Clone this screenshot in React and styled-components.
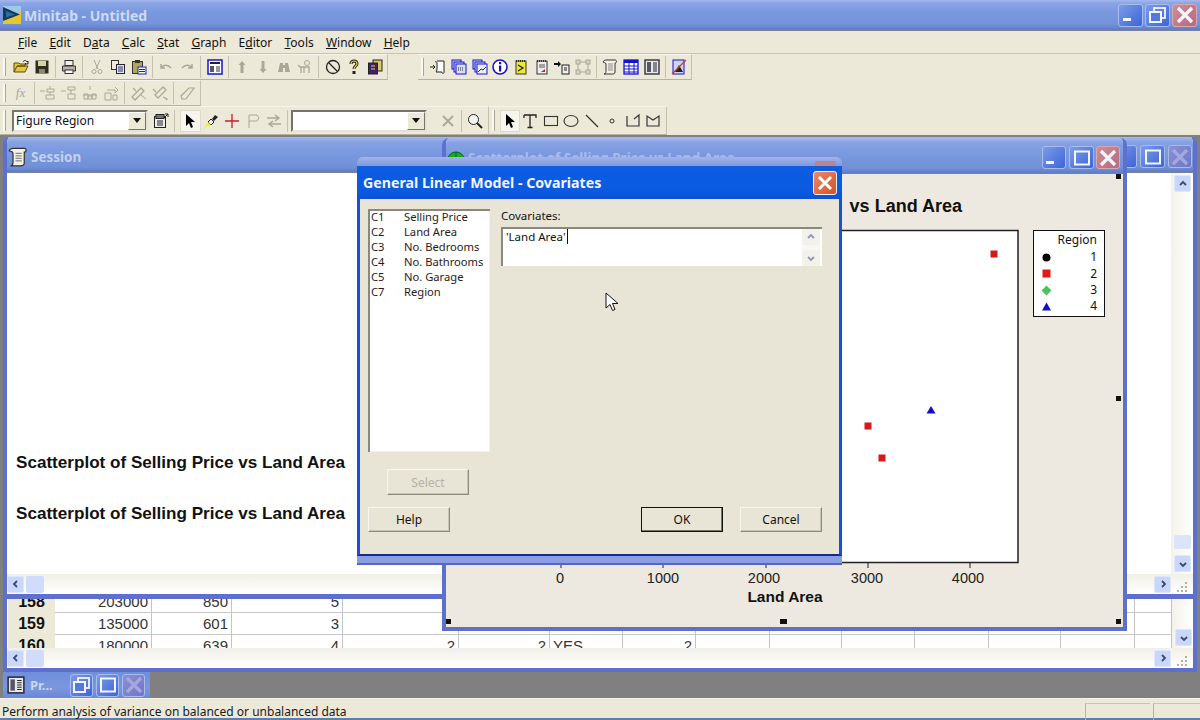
import React from 'react'
import styled, { createGlobalStyle } from 'styled-components'

const UI = `"Noto Sans", "DejaVu Sans", sans-serif`
const ARIAL = `"Liberation Sans", Arial, sans-serif`

const Global = createGlobalStyle`
  html, body { margin: 0; padding: 0; background: #808080; }
  * { box-sizing: border-box; }
`

const Ic = ({ children }) => <svg width="16" height="16" viewBox="0 0 16 16" fill="none">{children}</svg>
const G = '#aaa899'

const icons = {
  open: <><path d="M1 13V4h5l1 1h5v2H4l-3 6h11l3-6H4" fill="#e6c63c" stroke="#5c4c10" /><path d="M10 3c1-2 3-2 4 0l1-1v3h-3l1-1" stroke="#222" /></>,
  save: <><rect x="1.5" y="1.5" width="13" height="13" fill="#2e2e20" /><rect x="4" y="2" width="8" height="5" fill="#d8d4a0" /><rect x="5" y="10" width="6" height="4" fill="#8a8a70" /></>,
  print: <><rect x="4" y="1.5" width="8" height="5" fill="#eee" stroke="#333" /><path d="M1.5 7h13v5h-13z" fill="#b8b4a4" stroke="#333" /><rect x="4" y="11" width="8" height="3.5" fill="#fff" stroke="#333" /></>,
  cut: <><path d="M5 1l4 9M11 1L7 10" stroke={G} /><circle cx="5" cy="12.5" r="2" stroke={G} /><circle cx="11" cy="12.5" r="2" stroke={G} /></>,
  copy: <><rect x="1.5" y="1.5" width="7" height="9" fill="#eeeadc" stroke="#333" /><rect x="6.5" y="5.5" width="8" height="9" fill="#dfe4fa" stroke="#223" /><path d="M8 8h5M8 10h5M8 12h5" stroke="#335" /></>,
  paste: <><rect x="1.5" y="2.5" width="10" height="12" fill="#b0a850" stroke="#333" /><rect x="4" y="1" width="5" height="3" fill="#333" /><rect x="7" y="8" width="8" height="7" fill="#fff" stroke="#1820c0" /><path d="M8 10.5h6M8 12.5h6" stroke="#1820c0" /></>,
  undo: <path d="M3 5v4h4M3.5 8.5C6 5.5 10 5.5 13 9" stroke={G} strokeWidth="1.5" />,
  redo: <path d="M13 5v4H9M12.500 8.5C10 5.5 6 5.5 3 9" stroke={G} strokeWidth="1.5" />,
  frame: <><rect x="1" y="1" width="14" height="14" fill="#fff" stroke="#1414d0" strokeWidth="1.500" /><rect x="3" y="3" width="10" height="2" fill="#222" /><rect x="3" y="7" width="4" height="6" fill="#556" /><path d="M9 8h4M9 10h4M9 12h4" stroke="#333" /></>,
  up: <path d="M8 2l3.500 4H9.500v8h-3V6H4.500z" fill={G} />,
  down: <path d="M8 14l3.500-4H9.500V2h-3v8H4.500z" fill={G} />,
  binoc: <><path d="M2 13l2-9h3v9zM14 13l-2-9H9v9z" fill={G} /><rect x="7" y="6" width="2" height="3" fill={G} /></>,
  person: <><circle cx="10" cy="4" r="2.500" stroke={G} /><path d="M4 14V8h8v6M7 8v6M1 6l3 3" stroke={G} strokeWidth="1.300" /></>,
  ban: <><circle cx="8" cy="8" r="6.500" stroke="#222" strokeWidth="1.300" /><path d="M3.500 3.500l9 9" stroke="#222" strokeWidth="1.300" /></>,
  help: <><path d="M5 5c0-4 6-4 6 0 0 2-3 2-3 5" stroke="#222" strokeWidth="3" /><path d="M5 5c0-4 6-4 6 0 0 2-3 2-3 5" stroke="#e8d040" strokeWidth="1.200" /><rect x="6.500" y="12" width="3" height="3" fill="#222" /></>,
  stack: <><rect x="6" y="1" width="9" height="11" fill="#d8cc60" stroke="#222" /><rect x="1.500" y="4" width="9" height="11" fill="#402068" stroke="#222" /><path d="M4 7h4M4 10h4" stroke="#e8d860" /></>,
  sessIn: <><path d="M7 2h7v11c0 2-2 2-2 0H6c1-1 1-3 1-4V4C7 3 6 2 5 3" fill="#fff" stroke="#222" /><path d="M0 8h5M3 6l2 2-2 2" stroke="#222" /></>,
  winA: <><rect x="1" y="1" width="9" height="9" fill="#ccd4f0" stroke="#1414d0" /><rect x="3" y="3" width="10" height="10" fill="#ccd4f0" stroke="#1414d0" /><rect x="5" y="5" width="10" height="10" fill="#d8def0" stroke="#1414d0" /><path d="M7 9h6M7 11h6" stroke="#223" strokeDasharray="1 1" /></>,
  winB: <><rect x="1" y="1" width="9" height="9" fill="#ccd4f0" stroke="#1414d0" /><rect x="3" y="3" width="10" height="10" fill="#ccd4f0" stroke="#1414d0" /><rect x="5" y="5" width="10" height="10" fill="#e8ecf4" stroke="#1414d0" /><path d="M6 13l3-3 2 1 3-3" stroke="#333" /></>,
  info: <><circle cx="8" cy="8" r="7" fill="#fff" stroke="#1414d0" strokeWidth="1.600" /><rect x="7" y="3" width="2.200" height="2.200" fill="#1414b0" /><rect x="7" y="6.500" width="2.200" height="6" fill="#1414b0" /></>,
  noteY: <><rect x="3" y="2" width="10" height="13" fill="#f0e830" stroke="#333" /><path d="M3 2h10" stroke="#333" strokeDasharray="1 1" strokeWidth="2" /><path d="M5 6l5 3-5 3" stroke="#222" strokeWidth="1.300" /></>,
  noteR: <><rect x="3" y="2" width="10" height="13" fill="#eee" stroke="#333" /><path d="M3 2h10" stroke="#333" strokeDasharray="1 1" strokeWidth="2" /><path d="M5 6h6M5 8h6" stroke="#555" /><path d="M7 13l4-3v3z" fill="#d02020" /></>,
  arrowDoc: <><path d="M0 4h4V2l3 3-3 3V6H0z" fill="#111" /><rect x="8" y="6" width="7" height="9" fill="#eee" stroke="#222" /><path d="M10 9h3M10 11h3" stroke="#222" /></>,
  dashed: <><rect x="3" y="3" width="10" height="10" stroke={G} /><rect x="1" y="1" width="4" height="4" fill="#d8d4c4" stroke={G} /><rect x="11" y="1" width="4" height="4" fill="#d8d4c4" stroke={G} /><rect x="1" y="11" width="4" height="4" fill="#d8d4c4" stroke={G} /><rect x="11" y="11" width="4" height="4" fill="#d8d4c4" stroke={G} /></>,
  scroll: <><path d="M4 1h9c2 0 2 3 0 3v9c0 2-2 2-3 2H2c2 0 2-3 2-3V5C4 3 1 4 1 3c0-1 2-2 3-2z" fill="#f4f2e8" stroke="#333" /><path d="M6 5h5M6 7h5M6 9h5M6 11h5" stroke="#888" /></>,
  grid: <><rect x="1" y="1" width="14" height="14" fill="#fff" stroke="#1414d0" strokeWidth="1.300" /><rect x="1" y="1" width="14" height="3" fill="#1414d0" /><path d="M6 1v14M11 1v14M1 7h14M1 10h14M1 13h14" stroke="#1414d0" /></>,
  cols: <><rect x="1" y="1" width="14" height="14" fill="#e8e8e8" stroke="#223" strokeWidth="1.300" /><rect x="3" y="3" width="4" height="10" fill="#556" /><path d="M9 4h4M9 6h4M9 8h4M9 10h4M9 12h4" stroke="#223" /></>,
  crossed: <><rect x="2" y="1" width="11" height="14" fill="#cfd6f0" stroke="#1414d0" /><path d="M4 13l4-7 4 7z" fill="#222" /><path d="M1 15L15 1" stroke="#c84020" strokeWidth="1.300" /></>,
  flowA: <><path d="M0 6h5M7 4h7v3H7zM10 1v3M10 7v3M6 10h8v4H6z" stroke={G} /></>,
  flowB: <><path d="M0 6h5M7 2h7v3H7zM10 5v4M7 9h7v5H7z" stroke={G} /></>,
  flowC: <><path d="M8 1v4M1 10h14M2 9h4v5H2zM10 9h4v5h-4zM6 11h4v3H6z" stroke={G} /></>,
  flowD: <><path d="M2 8h6v7H2zM4 5h8v3M12 2l3 3-3 3M10 10h4v5h-4z" stroke={G} /></>,
  tool: <><path d="M1 12l9-9 3 3-9 9zM2 3l3 3" stroke={G} strokeWidth="1.300" /><path d="M10 10l5 4" stroke={G} /></>,
  toolB: <><path d="M3 10l8-8 3 3-8 8zM1 4l3 3M11 12l4 2-1 1" stroke={G} strokeWidth="1.300" /></>,
  eraser: <path d="M2 11l8-8h5L7 14H3z" stroke={G} strokeWidth="1.200" />,
  regionProps: <><rect x="1.500" y="3.500" width="11" height="11" fill="#eee" stroke="#222" /><rect x="3" y="1.500" width="8" height="4" fill="#777" stroke="#222" /><path d="M4 8h6M4 10h6M4 12h6" stroke="#222" /><path d="M11 5l4-4M15 1h-3M15 1v3" stroke="#222" /></>,
  pointer: <path d="M4 1l0 12 3-3 2 5 2-1-2-5 4 0z" fill="#000" />,
  brush: <><path d="M9 6l3-4 3 2-4 4z" fill="#222" /><path d="M8 6l3 3-3 3-3-3z" fill="#eee" stroke="#222" /><path d="M1 15l4-6 3 3z" fill="#f0ec40" /></>,
  plus: <path d="M8 1v14M1 8h14" stroke="#c02030" strokeWidth="1.300" />,
  flag: <><path d="M4 15V2h8l2 3-2 3H4" stroke={G} /></>,
  swap: <><path d="M1 5h11M9 2l4 3-4 3M15 11H4M7 8l-4 3 4 3" stroke={G} strokeWidth="1.500" /></>,
  xGray: <path d="M3 3l10 10M13 3L3 13" stroke={G} strokeWidth="1.800" />,
  zoom: <><circle cx="6.500" cy="6.500" r="5" fill="#f4f4f0" stroke="#222" /><path d="M10 10l5 5" stroke="#222" strokeWidth="2" /></>,
  T: <path d="M2 2h12v3M2 2v3M8 2v12M5.500 14.500h5" stroke="#222" strokeWidth="1.300" />,
  rect: <rect x="1.500" y="3.500" width="13" height="9" stroke="#333" strokeWidth="1.100" />,
  ellipse: <ellipse cx="8" cy="8" rx="7" ry="5.500" stroke="#333" strokeWidth="1.100" />,
  line: <path d="M2 2l12 12" stroke="#333" strokeWidth="1.300" />,
  dot: <circle cx="8" cy="8" r="2" stroke="#333" />,
  polyA: <path d="M2 3v10h12V2L9 6" stroke="#333" strokeWidth="1.200" />,
  polyB: <path d="M2 13V3l6 4 6-4v10z" stroke="#333" strokeWidth="1.200" />,
}

const AppFrame = styled.div`
  width: 1200px;
  height: 720px;
  overflow: hidden;
  display: flex;
  flex-direction: column;
  background: #ece9d8;
  font-family: ${UI};
  color: #111;
`

const AppTitle = styled.div`
  height: 31px;
  flex: none;
  display: flex;
  align-items: center;
  padding: 0 3px;
  background: linear-gradient(#a3b9ee 0, #8ba5e6 3px, #7a99de 12px, #7593da 24px, #5f7bc8 30px);
  border-bottom: 1px solid #7c7f9c;
`
const AppName = styled.span`
  margin-left: 3px;
  flex: 1;
  font: bold 14px ${UI};
  color: #cfdaf4;
`

const WinBtn = styled.span`
  width: ${p => p.$w || 25}px;
  height: 23px;
  margin-left: ${p => p.$gap ?? 2}px;
  flex: none;
  display: flex;
  align-items: center;
  justify-content: center;
  border-radius: 3px;
  border: 1px solid ${p => (p.$close ? '#d8a8b4' : '#a8bcec')};
  background: ${p => {
    if (p.$dim) return 'linear-gradient(135deg,#8a90d4,#6f78c8)'
    if (p.$close) return 'linear-gradient(135deg,#c99098,#b9697c)'
    return 'linear-gradient(135deg,#7c9ce8,#3c64d8)'
  }};
`

const BtnGlyph = ({ kind, dim }) => {
  const w = dim ? '#a4a8e0' : '#f4f6fc'
  return (
    <svg width="20" height="18" viewBox="0 0 20 18" fill="none">
      {kind === 'min' && <rect x="2" y="12" width="8" height="3" fill={w} />}
      {kind === 'max' && <rect x="3" y="2.500" width="14" height="13" stroke={w} strokeWidth="2" />}
      {kind === 'restore' && <><rect x="6" y="2" width="11" height="10" stroke={w} strokeWidth="1.800" /><rect x="2" y="6" width="11" height="10" fill="#5578dc" stroke={w} strokeWidth="2" /></>}
      {kind === 'close' && <path d="M3 2l14 14M17 2L3 16" stroke={w} strokeWidth="3.200" />}
    </svg>
  )
}

const MenuBar = styled.div`
  height: 23px;
  flex: none;
  display: flex;
  align-items: center;
  gap: 12.200px;
  padding-left: 18px;
  border-bottom: 1px solid #c8c5b2;
  font-size: 12px;
`
const MenuItem = styled.span`
  white-space: nowrap;
  u { text-underline-offset: 1px; }
`

const ToolRow = styled.div`
  height: ${p => p.$h || 26}px;
  flex: none;
  display: flex;
  align-items: stretch;
`
const ToolBar = styled.div`
  position: relative;
  display: flex;
  align-items: center;
  padding-left: ${p => p.$pad || 10}px;
  padding-right: ${p => p.$end || 2}px;
  margin-left: ${p => p.$ml || 0}px;
  border-top: 1px solid #f6f4ea;
  border-bottom: 1px solid #b5b2a0;
  border-right: 1px solid #c4c1ae;
  &::before {
    content: '';
    position: absolute;
    left: 3px;
    top: 3px;
    bottom: 3px;
    width: 2px;
    background: #fafaf4;
    border-right: 1px solid #a8a594;
  }
`
const ToolBtn = styled.span`
  width: ${p => p.$w || 21}px;
  height: 22px;
  flex: none;
  margin-left: ${p => p.$ml || 0}px;
  display: flex;
  align-items: center;
  justify-content: center;
  font: italic 13px "Liberation Serif", serif;
  color: ${G};
  background: ${p => (p.$on ? '#f6f5ee' : 'transparent')};
  border: ${p => (p.$on ? '1px solid #dddac8' : 'none')};
`
const Sep = styled.i`
  width: 6.5px;
  height: 22px;
  flex: none;
  background: linear-gradient(#c4c1ae, #c4c1ae) center / 1px 100% no-repeat;
`
const Combo = styled.div`
  width: 136px;
  height: 22px;
  flex: none;
  margin: ${p => p.$m || 0};
  display: flex;
  align-items: center;
  background: #fff;
  border: 2px solid;
  border-color: #77756a #e6e3d4 #e6e3d4 #77756a;
  font-size: 12px;
  padding-left: 2px;
  white-space: nowrap;
`
const ComboText = styled.span`
  flex: 1;
  color: #112;
`
const ComboArrow = styled.span`
  width: 18px;
  height: 18px;
  display: flex;
  align-items: center;
  justify-content: center;
  background: #ece9d8;
  border: 1px solid;
  border-color: #fff #77756a #77756a #fff;
  &::after {
    content: '';
    border: 4px solid transparent;
    border-top: 5px solid #111;
    border-bottom: 0;
  }
`

const Mdi = styled.div`
  position: relative;
  flex: 1;
  background: #808080;
`

const Win = styled.div`
  position: absolute;
  display: flex;
  flex-direction: column;
  border: 4px solid #5d70ce;
  border-top: 0;
  border-radius: 7px 7px 0 0;
  overflow: hidden;
`
const SessionWin = styled(Win)`
  left: 3px;
  top: 2px;
  width: 1194px;
  height: 461px;
  background: #fff;
`
const GraphWin = styled(Win)`
  left: 442px;
  top: 3px;
  width: 685px;
  height: 493px;
  background: #ede9e0;
`
const SheetWin = styled(Win)`
  left: 3px;
  top: 461px;
  width: 1194px;
  height: 76px;
  border-top: 3px solid #5d70ce;
  border-radius: 0;
  background: #fff;
`
const WinTitle = styled.div`
  height: 36px;
  flex: none;
  display: flex;
  align-items: center;
  padding: 4px ${p => p.$right || 1}px 0 1px;
  background: linear-gradient(#a3b9ee 0, #86a1e4 5px, #7a99de 16px, #7090d8 30px, #5f7bc8 35px);
  border-bottom: 1px solid #7c7f9c;
`
const TitleText = styled.span`
  flex: 1;
  margin-left: 3px;
  font: bold 13.5px ${UI};
  color: ${p => (p.$faint ? '#a9bcea' : '#c3d0f0')};
  white-space: nowrap;
  overflow: hidden;
`
const SessionPane = styled.div`
  flex: 1;
  min-height: 0;
  display: flex;
`
const SessionLog = styled.div`
  flex: 1;
  display: flex;
  flex-direction: column;
  justify-content: flex-end;
  gap: 31px;
  padding: 0 0 50px 9px;
  font: bold 17.100px/20px ${ARIAL};
  color: #111;
`
const VBar = styled.div`
  width: 22px;
  flex: none;
  display: flex;
  flex-direction: column;
  align-items: flex-start;
  justify-content: space-between;
  padding: 2px 2px 2px 3px;
  background: linear-gradient(90deg, #f3f2ea, #fff);
`
const HBar = styled.div`
  height: 20px;
  flex: none;
  display: flex;
  align-items: center;
  padding-right: 2px;
  background: linear-gradient(#f1f0e8, #fff);
`
const ScrollBtn = styled.span`
  width: 17px;
  height: 17px;
  flex: none;
  display: flex;
  align-items: center;
  justify-content: center;
  background: #c9d8fa;
  border: 1px solid #dde6fb;
  border-radius: 2px;
`
const Thumb = styled.span`
  width: 18px;
  height: 17px;
  margin-left: 2px;
  background: #d0dcf9;
  border-radius: 2px;
`
const VThumb = styled.span`
  width: 17px;
  height: 14px;
  margin-top: auto;
  margin-bottom: 6px;
  background: #dbe4f8;
  border-radius: 2px;
`
const HSpacer = styled.span`
  flex: 1;
`
const GripBox = styled.span`
  width: 17px;
  height: 17px;
  margin-left: 3px;
  flex: none;
  display: flex;
`
const Grip = () => (
  <GripBox>
    <svg width="17" height="17" viewBox="0 0 17 17" fill="#b4b1a0">
      <rect x="11" y="6" width="2" height="2" />
      <rect x="7" y="10" width="2" height="2" /><rect x="11" y="10" width="2" height="2" />
      <rect x="3" y="14" width="2" height="2" /><rect x="7" y="14" width="2" height="2" /><rect x="11" y="14" width="2" height="2" />
    </svg>
  </GripBox>
)

const Chev = ({ dir }) => {
  const d = { up: 'M2 6l3-3 3 3', down: 'M2 4l3 3 3-3', left: 'M6 2L3 5l3 3', right: 'M4 2l3 3-3 3' }[dir]
  return <svg width="10" height="10" viewBox="0 0 10 10" fill="none"><path d={d} stroke="#3a4a78" strokeWidth="1.800" /></svg>
}

const GraphBody = styled.div`
  position: relative;
  flex: 1;
  min-height: 0;
`
const ChartTitle = styled.div`
  margin-top: 22px;
  height: 21px;
  padding-right: 161px;
  text-align: right;
  white-space: nowrap;
  font: bold 18px/21px ${ARIAL};
  color: #111;
`
const Legend = styled.div`
  position: absolute;
  right: 18px;
  top: 56px;
  width: 72px;
  height: 87px;
  background: #fff;
  border: 1px solid #111;
  padding: 1px 7px 0 7px;
  font: 12px/16.300px ${UI};
`
const LegendHead = styled.div`
  text-align: right;
  margin-bottom: 1px;
`
const LegendRow = styled.div`
  display: flex;
  align-items: center;
  justify-content: space-between;
`
const Handle = styled.i`
  position: absolute;
  width: ${p => p.$w || 5}px;
  height: 5px;
  background: #111;
  left: ${p => p.$x}px;
  top: ${p => p.$y}px;
`

const SheetRows = styled.div`
  flex: 1;
  min-height: 0;
  overflow: hidden;
  display: flex;
  padding-left: 1px;
`
const SheetGrid = styled.div`
  flex: 1;
  margin-top: -8px;
`
const SheetRow = styled.div`
  display: grid;
  grid-template-columns: 47px 97px 80px 111px 116px 91px 73px 73px 74px 72px 73px 74px 72px 74px 37px;
  height: 22px;
  border-bottom: 1px solid #c8c8c8;
`
const RowHead = styled.div`
  background: #ece9d8;
  text-align: center;
  font: bold 16px/22px ${ARIAL};
`
const Cell = styled.div`
  border-right: 1px solid #c4c4c4;
  padding: 0 3px;
  text-align: ${p => (p.$left ? 'left' : 'right')};
  font: 15px/22px ${ARIAL};
  color: #333;
  white-space: nowrap;
`
const SheetVBar = styled.div`
  width: 22px;
  flex: none;
  display: flex;
  align-items: flex-end;
  padding: 0 2px 2px 3px;
  background: linear-gradient(90deg, #f3f2ea, #fff);
`

const MiniWin = styled.div`
  position: absolute;
  left: 3px;
  top: 537px;
  width: 147px;
  height: 26px;
  display: flex;
  align-items: center;
  padding: 0 5px 0 4px;
  border-radius: 0 0 3px 3px;
  background: linear-gradient(#6f8edc, #7a97de 60%, #6a88d6);
`
const MiniText = styled.span`
  flex: 1;
  margin-left: 5px;
  font: bold 13px ${UI};
  color: #c9d6f4;
`

const Dialog = styled.div`
  position: absolute;
  left: 357px;
  top: 22px;
  width: 485px;
  height: 408px;
  display: flex;
  flex-direction: column;
  border-radius: 6px 6px 0 0;
  overflow: hidden;
  background: #8b9ee4;
  border-bottom: 2px solid #5566c4;
`
const GhostStrip = styled.div`
  height: 9px;
  flex: none;
  display: flex;
  justify-content: flex-end;
  padding: 4px 6px 0 0;
  background: linear-gradient(#a3b4ea, #7f98e0);
`
const GhostClose = styled.i`
  width: 21px;
  height: 5px;
  background: #c4808c;
  border-radius: 2px 2px 0 0;
`
const DialogTitle = styled.div`
  height: 33px;
  flex: none;
  display: flex;
  align-items: center;
  padding: 0 5px 0 6px;
  background: linear-gradient(#1060e0 0, #0c5ce4 2px, #0b5ae0 24px, #0a52d0 33px);
`
const DialogName = styled.span`
  flex: 1;
  font: bold 14.200px ${UI};
  color: #f2f6ff;
`
const DialogClose = styled.span`
  width: 24px;
  height: 24px;
  display: flex;
  align-items: center;
  justify-content: center;
  border: 1px solid #f4f4f4;
  border-radius: 3px;
  background: linear-gradient(135deg, #ea8a66, #d8502c);
`
const DialogBody = styled.div`
  position: relative;
  flex: none;
  height: 357px;
  display: flex;
  flex-direction: column;
  padding: 10px 17px 20px 8px;
  background: #e8e4d6;
  border: solid #1a50d4;
  border-width: 0 3px;
  border-bottom: 2px solid #142a90;
`
const DialogMain = styled.div`
  flex: 1;
  display: flex;
  gap: 11px;
`
const LeftCol = styled.div`
  width: 122px;
  flex: none;
`
const ColList = styled.div`
  height: 243px;
  padding: 0 3px;
  background: #fff;
  box-shadow: inset 2px 2px 0 #8a887c, inset -1px -1px 0 #f4f2e8;
  font-size: 11.200px;
  line-height: 15px;
`
const ColRow = styled.div`
  display: grid;
  grid-template-columns: 33px 1fr;
  white-space: nowrap;
  color: #2a1a20;
`
const SelectWrap = styled.div`
  margin: 17px 0 0 19px;
`
const RightCol = styled.div`
  flex: 1;
  font-size: 11.500px;
`
const FieldLabel = styled.div`
  height: 14px;
  line-height: 14px;
  margin-bottom: 4px;
`
const MemoBox = styled.div`
  height: 39px;
  display: flex;
  background: #fff;
  box-shadow: inset 2px 2px 0 #8a887c;
  padding: 2px 2px 0 5px;
`
const MemoText = styled.div`
  flex: 1;
  line-height: 16px;
  span { border-right: 1px solid #111; padding-right: 1px; }
`
const MemoScroll = styled.div`
  width: 18px;
  flex: none;
  display: flex;
  flex-direction: column;
  justify-content: space-between;
  background: #f2f1ea;
  opacity: .55;
`
const MemoArrow = styled.span`
  height: 16px;
  display: flex;
  align-items: center;
  justify-content: center;
  background: #e8e6da;
  border-radius: 2px;
`
const DialogFoot = styled.div`
  flex: none;
  display: flex;
  align-items: center;
  gap: 17px;
  margin-bottom: 2px;
`
const Btn = styled.span`
  width: ${p => p.$w || 82}px;
  height: ${p => p.$h || 25}px;
  display: flex;
  align-items: center;
  justify-content: center;
  font-size: 12px;
  color: ${p => (p.$off ? '#b4b2a6' : '#111')};
  background: #e8e4d6;
  border: 1px solid;
  border-color: ${p => (p.$def ? '#111' : '#f8f6ec #8c8a7c #8c8a7c #f8f6ec')};
  box-shadow: ${p => (p.$def ? 'inset -1px -1px 0 #77756a' : 'inset -1px -1px 0 #c8c5b4')};
`
const FootSpacer = styled.span`
  flex: 1;
`
const Cursor = styled.svg`
  position: absolute;
  left: 245px;
  top: 93px;
`

const StatusBar = styled.div`
  height: 22px;
  flex: none;
  display: flex;
  align-items: center;
  padding: 5px 0 0 2px;
  border-top: 1px solid #f6f4ea;
  border-bottom: 2px solid #5a7fb8;
  font-size: 12px;
  color: #1a1a22;
`
const StatusText = styled.span`
  flex: 1;
  white-space: nowrap;
`
const StatusPane = styled.span`
  width: ${p => p.$w}px;
  height: 17px;
  margin-left: 3px;
  flex: none;
  border-left: 1px solid #b5b2a0;
  border-top: 1px solid #c8c5b2;
`

const menu = [
  ['', 'F', 'ile'], ['', 'E', 'dit'], ['D', 'a', 'ta'], ['', 'C', 'alc'], ['', 'S', 'tat'],
  ['', 'G', 'raph'], ['E', 'd', 'itor'], ['', 'T', 'ools'], ['', 'W', 'indow'], ['', 'H', 'elp'],
]
const columns = [
  ['C1', 'Selling Price'], ['C2', 'Land Area'], ['C3', 'No. Bedrooms'],
  ['C4', 'No. Bathrooms'], ['C5', 'No. Garage'], ['C7', 'Region'],
]
const rows = [
  ['158', '203000', '850', '5', '', ''],
  ['159', '135000', '601', '3', '', ''],
  ['160', '180000', '639', '4', '2', '2'],
]

const Tools = ({ names, w }) => names.map((n, i) =>
  n === '|' ? <Sep key={i} /> : <ToolBtn key={i} $w={w}><Ic>{icons[n]}</Ic></ToolBtn>
)

const Chart = () => (
  <svg width="677" height="408" viewBox="0 0 677 408">
    <rect x="60" y="13.500" width="512" height="332" fill="#fff" stroke="#222" strokeWidth="1.500" />
    {[115, 217, 320, 422, 524].map(x => <path key={x} d={`M${x} 345v6`} stroke="#222" />)}
    {[[114, '0'], [217, '1000'], [318, '2000'], [421, '3000'], [522, '4000']].map(([x, t]) => (
      <text key={t} x={x} y="366" textAnchor="middle" fontFamily="Liberation Sans" fontSize="14.500" fill="#222">{t}</text>
    ))}
    <text x="339" y="385" textAnchor="middle" fontFamily="Liberation Sans" fontWeight="700" fontSize="15.500" fill="#111">Land Area</text>
    {[[548, 37], [422, 209], [436, 241]].map(([x, y]) => <rect key={x} x={x - 3.500} y={y - 3.500} width="7" height="7" fill="#d81818" />)}
    <path d="M485 189l4.500 7.500h-9z" fill="#1010c8" />
  </svg>
)

export default function App() {
  return (
    <AppFrame>
      <Global />
      <AppTitle>
        <svg width="18" height="18" viewBox="0 0 18 18">
          <rect width="18" height="18" fill="#e8c828" />
          <path d="M0 0h18v6L6 9z" fill="#9ec8e8" />
          <path d="M0 1l17 7.500L0 15z" fill="#123a5c" />
          <path d="M3 5l9 3.500-9 3z" fill="#2d6ea0" />
        </svg>
        <AppName>Minitab - Untitled</AppName>
        <WinBtn><BtnGlyph kind="min" /></WinBtn>
        <WinBtn><BtnGlyph kind="restore" /></WinBtn>
        <WinBtn $close><BtnGlyph kind="close" /></WinBtn>
      </AppTitle>

      <MenuBar>
        {menu.map(([a, u, b]) => <MenuItem key={a + u + b}>{a}<u>{u}</u>{b}</MenuItem>)}
      </MenuBar>

      <ToolRow>
        <ToolBar>
          <Tools names={['open', 'save', '|', 'print', '|', 'cut', 'copy', 'paste', '|', 'undo', 'redo', '|', 'frame', '|', 'up', 'down', 'binoc', 'person', '|', 'ban', 'help', 'stack']} />
        </ToolBar>
        <ToolBar $ml={30}>
          <Tools w={20.700} names={['sessIn', 'winA', 'winB', 'info', 'noteY', 'noteR', 'arrowDoc', 'dashed', '|', 'scroll', 'grid', 'cols', '|', 'crossed']} />
        </ToolBar>
      </ToolRow>
      <ToolRow>
        <ToolBar>
          <ToolBtn>fx</ToolBtn>
          <Tools names={['|', 'flowA', 'flowB', 'flowC', 'flowD', '|', 'tool', 'toolB', '|', 'eraser']} />
        </ToolBar>
      </ToolRow>
      <ToolRow $h={29}>
        <ToolBar $pad={12}>
          <Combo $m="0 2px 0 0">
            <ComboText>Figure Region</ComboText>
            <ComboArrow />
          </Combo>
          <Tools names={['regionProps', '|']} />
          <ToolBtn $on $ml={2}><Ic>{icons.pointer}</Ic></ToolBtn>
          <Tools names={['brush', 'plus', 'flag', 'swap', '|']} />
          <Combo $m="0 10px 0 0">
            <ComboText />
            <ComboArrow />
          </Combo>
          <Tools names={['xGray', '|', 'zoom']} />
        </ToolBar>
        <ToolBar $pad={11}>
          <ToolBtn $on $w={20.500}><Ic>{icons.pointer}</Ic></ToolBtn>
          <Tools w={20.500} names={['T', 'rect', 'ellipse', 'line', 'dot', 'polyA', 'polyB']} />
        </ToolBar>
      </ToolRow>

      <Mdi>
        <SheetWin>
          <SheetRows>
            <SheetGrid>
              {rows.map(r => (
                <SheetRow key={r[0]}>
                  <RowHead>{r[0]}</RowHead>
                  {r.slice(1).map((v, i) => <Cell key={i}>{v}</Cell>)}
                  <Cell $left>{r[0] === '160' ? 'YES' : ''}</Cell>
                  <Cell>{r[0] === '160' ? '2' : ''}</Cell>
                  {Array.from({ length: 7 }, (_, i) => <Cell key={'e' + i} />)}
                </SheetRow>
              ))}
            </SheetGrid>
            <SheetVBar><ScrollBtn><Chev dir="down" /></ScrollBtn></SheetVBar>
          </SheetRows>
          <HBar>
            <ScrollBtn><Chev dir="left" /></ScrollBtn>
            <Thumb />
            <HSpacer />
            <ScrollBtn><Chev dir="right" /></ScrollBtn>
            <Grip />
          </HBar>
        </SheetWin>

        <SessionWin>
          <WinTitle>
            <svg width="20" height="20" viewBox="0 0 16 16" fill="none">{icons.scroll}</svg>
            <TitleText>Session</TitleText>
            <WinBtn $w={24} $gap={3}><BtnGlyph kind="min" /></WinBtn>
            <WinBtn $w={25} $gap={3}><BtnGlyph kind="max" /></WinBtn>
            <WinBtn $dim $w={24} $gap={3}><BtnGlyph kind="close" dim /></WinBtn>
          </WinTitle>
          <SessionPane>
            <SessionLog>
              <div>Scatterplot of Selling Price vs Land Area</div>
              <div>Scatterplot of Selling Price vs Land Area</div>
            </SessionLog>
            <VBar>
              <ScrollBtn><Chev dir="up" /></ScrollBtn>
              <VThumb />
              <ScrollBtn><Chev dir="down" /></ScrollBtn>
            </VBar>
          </SessionPane>
          <HBar>
            <ScrollBtn><Chev dir="left" /></ScrollBtn>
            <Thumb />
            <HSpacer />
            <ScrollBtn><Chev dir="right" /></ScrollBtn>
            <Grip />
          </HBar>
        </SessionWin>

        <MiniWin>
          <svg width="18" height="18" viewBox="0 0 16 16" fill="none">{icons.cols}</svg>
          <MiniText>Pr...</MiniText>
          <WinBtn $w={23} $gap={3}><BtnGlyph kind="restore" /></WinBtn>
          <WinBtn $w={23} $gap={3}><BtnGlyph kind="max" /></WinBtn>
          <WinBtn $dim $w={23} $gap={3}><BtnGlyph kind="close" dim /></WinBtn>
        </MiniWin>

        <GraphWin>
          <WinTitle $right={3}>
            <svg width="18" height="16" viewBox="0 0 18 16">
              <ellipse cx="9" cy="9" rx="8" ry="7" fill="#1ea81e" stroke="#063" />
              <path d="M9 2v14M1 9h16" stroke="#063" />
            </svg>
            <TitleText $faint>Scatterplot of Selling Price vs Land Area</TitleText>
            <WinBtn $w={24} $gap={3}><BtnGlyph kind="min" /></WinBtn>
            <WinBtn $w={25} $gap={3}><BtnGlyph kind="max" /></WinBtn>
            <WinBtn $close $w={24} $gap={2}><BtnGlyph kind="close" /></WinBtn>
          </WinTitle>
          <GraphBody>
            <ChartTitle>vs Land Area</ChartTitle>
            <Chart />
            <Legend>
              <LegendHead>Region</LegendHead>
              {[
                <circle key="a" cx="5.500" cy="5.500" r="4" fill="#000" />,
                <rect key="b" x="1.500" y="1.500" width="8" height="8" fill="#e81818" />,
                <path key="c" d="M5.500 .5l5 5-5 5-5-5z" fill="#50c060" />,
                <path key="d" d="M5.500 1.500l4.500 8H1z" fill="#1010c8" />,
              ].map((m, i) => (
                <LegendRow key={i}>
                  <svg width="11" height="11" viewBox="0 0 11 11">{m}</svg>
                  <span>{i + 1}</span>
                </LegendRow>
              ))}
            </Legend>
            <Handle $x={670} $y={0} />
            <Handle $x={670} $y={222} />
            <Handle $x={0} $y={445} />
            <Handle $x={334} $y={445} $w={7} />
            <Handle $x={670} $y={445} />
          </GraphBody>
        </GraphWin>

        <Dialog>
          <GhostStrip><GhostClose /></GhostStrip>
          <DialogTitle>
            <DialogName>General Linear Model - Covariates</DialogName>
            <DialogClose>
              <svg width="16" height="16" viewBox="0 0 16 16"><path d="M2 2l12 12M14 2L2 14" stroke="#fff" strokeWidth="3" /></svg>
            </DialogClose>
          </DialogTitle>
          <DialogBody>
            <DialogMain>
              <LeftCol>
                <ColList>
                  {columns.map(([c, n]) => <ColRow key={c}><span>{c}</span><span>{n}</span></ColRow>)}
                </ColList>
                <SelectWrap><Btn $off $h={26}>Select</Btn></SelectWrap>
              </LeftCol>
              <RightCol>
                <FieldLabel>Covariates:</FieldLabel>
                <MemoBox>
                  <MemoText><span>'Land Area'</span></MemoText>
                  <MemoScroll>
                    <MemoArrow><Chev dir="up" /></MemoArrow>
                    <MemoArrow><Chev dir="down" /></MemoArrow>
                  </MemoScroll>
                </MemoBox>
              </RightCol>
            </DialogMain>
            <DialogFoot>
              <Btn>Help</Btn>
              <FootSpacer />
              <Btn $def>OK</Btn>
              <Btn>Cancel</Btn>
            </DialogFoot>
            <Cursor width="14" height="20" viewBox="0 0 14 20">
              <path d="M1 1v15l4-3.500 2.500 6 2.500-1-2.500-6H13z" fill="#fff" stroke="#111" />
            </Cursor>
          </DialogBody>
        </Dialog>
      </Mdi>

      <StatusBar>
        <StatusText>Perform analysis of variance on balanced or unbalanced data</StatusText>
        <StatusPane $w={65} />
        <StatusPane $w={47} />
      </StatusBar>
    </AppFrame>
  )
}
